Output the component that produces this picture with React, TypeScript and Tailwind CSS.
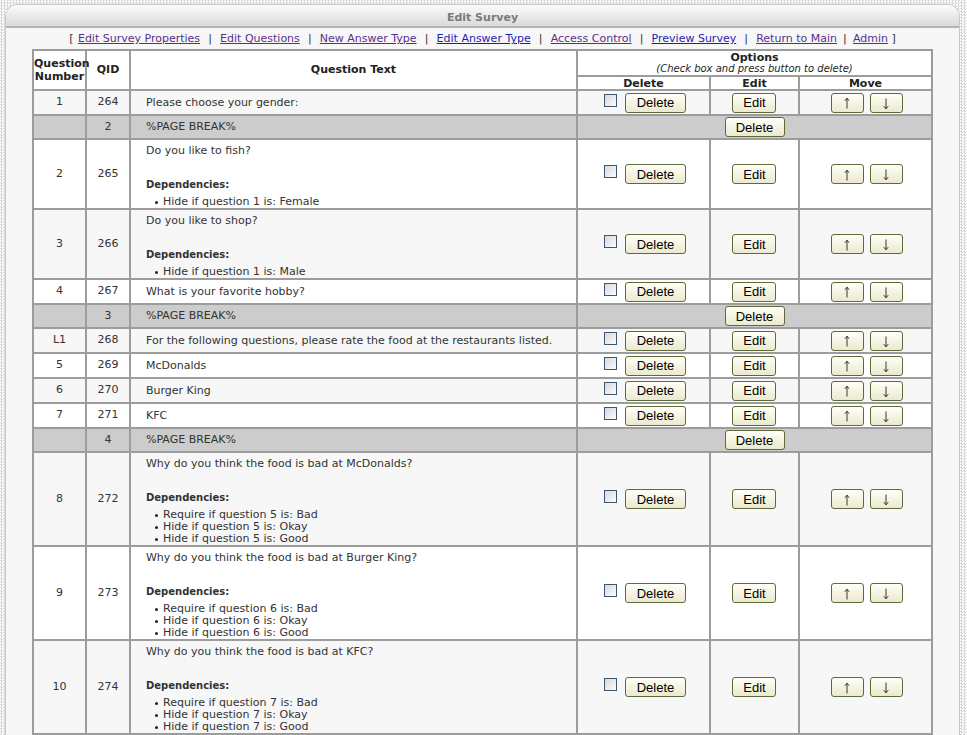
import React from "react";

type Row =
  | { type: "q"; num: string; qid: string; text: string; deps?: string[] }
  | { type: "pb"; page: string };

const rows: Row[] = [
  { type: "q", num: "1", qid: "264", text: "Please choose your gender:" },
  { type: "pb", page: "2" },
  { type: "q", num: "2", qid: "265", text: "Do you like to fish?", deps: ["Hide if question 1 is: Female"] },
  { type: "q", num: "3", qid: "266", text: "Do you like to shop?", deps: ["Hide if question 1 is: Male"] },
  { type: "q", num: "4", qid: "267", text: "What is your favorite hobby?" },
  { type: "pb", page: "3" },
  { type: "q", num: "L1", qid: "268", text: "For the following questions, please rate the food at the restaurants listed." },
  { type: "q", num: "5", qid: "269", text: "McDonalds" },
  { type: "q", num: "6", qid: "270", text: "Burger King" },
  { type: "q", num: "7", qid: "271", text: "KFC" },
  { type: "pb", page: "4" },
  {
    type: "q",
    num: "8",
    qid: "272",
    text: "Why do you think the food is bad at McDonalds?",
    deps: ["Require if question 5 is: Bad", "Hide if question 5 is: Okay", "Hide if question 5 is: Good"],
  },
  {
    type: "q",
    num: "9",
    qid: "273",
    text: "Why do you think the food is bad at Burger King?",
    deps: ["Require if question 6 is: Bad", "Hide if question 6 is: Okay", "Hide if question 6 is: Good"],
  },
  {
    type: "q",
    num: "10",
    qid: "274",
    text: "Why do you think the food is bad at KFC?",
    deps: ["Require if question 7 is: Bad", "Hide if question 7 is: Okay", "Hide if question 7 is: Good"],
  },
];

function Btn({ children, w }: { children: React.ReactNode; w: string }) {
  return (
    <span
      className={`${w} inline-flex h-[20px] items-center justify-center rounded-[3px] border border-[#5d6b3b] bg-gradient-to-b from-[#fffff7] to-[#ebe9cf] text-[13px] leading-none text-black [font-family:'Liberation_Sans',Arial,sans-serif]`}
    >
      {children}
    </span>
  );
}

function Arrow({ up }: { up: boolean }) {
  return (
    <svg width="8" height="12" viewBox="0 0 8 12" className={up ? "mt-[1px]" : "mt-[2px]"}>
      {up ? (
        <path d="M4 1.2V11.5M1.8 3.8L4 1.2L6.2 3.8" stroke="#222" strokeWidth="0.9" fill="none" />
      ) : (
        <path d="M4 0.5V10.8M1.8 8.2L4 10.8L6.2 8.2" stroke="#222" strokeWidth="0.9" fill="none" />
      )}
    </svg>
  );
}

function Check() {
  return (
    <span className="mt-[1px] inline-block h-[13px] w-[13px] border border-[#3f5670] bg-gradient-to-br from-[#d6d9de] to-[#fbfbfb]" />
  );
}

const td = "border border-[#9c9c9c]";

const links: { t: string; c: string }[] = [
  { t: "Edit Survey Properties", c: "text-[#5a2f8c]" },
  { t: "Edit Questions", c: "text-[#5a2f8c]" },
  { t: "New Answer Type", c: "text-[#5a2f8c]" },
  { t: "Edit Answer Type", c: "text-[#1e1eb4]" },
  { t: "Access Control", c: "text-[#5a2f8c]" },
  { t: "Preview Survey", c: "text-[#1e1eb4]" },
  { t: "Return to Main", c: "text-[#5a2f8c]" },
  { t: "Admin", c: "text-[#5a2f8c]" },
];

export default function App() {
  let qi = 0;
  return (
    <div className="h-[735px] w-full overflow-hidden bg-white bg-[repeating-conic-gradient(#d9d9d9_0_25%,#ffffff_0_50%)] bg-[length:3px_3px] pt-[4px] pl-[5px] pr-[7px] [font-family:'DejaVu_Sans',Verdana,sans-serif]">
      <div className="h-[760px] rounded-t-[12px] border border-[#c8c8c8] bg-[#f7f7f7]">
        <div className="flex h-[23px] items-center justify-center rounded-t-[12px] border-b-2 border-[#b4b4b4] bg-gradient-to-b from-[#fbfbfb] to-[#dadada] pt-[5px] text-[11px] font-bold text-[#7a7a7a]">
          Edit Survey
        </div>
        <div className="mt-[4px] flex h-[15px] items-center justify-center whitespace-pre text-[11px] text-[#333]">
          <span className="mr-[1px]">[ </span>
          {links.map((l, i) => (
            <React.Fragment key={l.t}>
              <span className={`underline ${l.c}`}>{l.t}</span>
              {i < links.length - 1 ? (
                i === links.length - 2 ? (
                  <span className="w-[16px] pl-[6px]">|</span>
                ) : (
                  <span className="w-[20px] text-center">|</span>
                )
              ) : (
                <span> ]</span>
              )}
            </React.Fragment>
          ))}
        </div>
        <table className="mx-auto mt-[2px] w-[900px] table-fixed border-separate border-spacing-0 border border-[#9c9c9c] text-[11px] text-[#333]">
          <colgroup>
            <col className="w-[53px]" />
            <col className="w-[44px]" />
            <col className="w-[447px]" />
            <col className="w-[133px]" />
            <col className="w-[89px]" />
            <col className="w-[133px]" />
          </colgroup>
          <thead>
            <tr className="bg-white">
              <th rowSpan={2} className={`${td} p-0 text-[11px] leading-[13px] font-bold text-[#222]`}>
                Question
                <br />
                Number
              </th>
              <th rowSpan={2} className={`${td} p-0 font-bold text-[#222]`}>
                QID
              </th>
              <th rowSpan={2} className={`${td} p-0 font-bold text-[#222]`}>
                Question Text
              </th>
              <th colSpan={3} className={`${td} h-[26px] p-0 leading-[11px] text-[#222]`}>
                <div className="font-bold">Options</div>
                <div className="text-[10px] font-normal italic">(Check box and press button to delete)</div>
              </th>
            </tr>
            <tr className="bg-white">
              <th className={`${td} h-[14px] p-0 leading-[11px] font-bold text-[#222]`}>Delete</th>
              <th className={`${td} h-[14px] p-0 leading-[11px] font-bold text-[#222]`}>Edit</th>
              <th className={`${td} h-[14px] p-0 leading-[11px] font-bold text-[#222]`}>Move</th>
            </tr>
          </thead>
          <tbody>
            {rows.map((r, i) => {
              if (r.type === "pb") {
                return (
                  <tr key={i} className="bg-[#cccccc]">
                    <td className={`${td} h-[24px] p-0`} />
                    <td className={`${td} p-0 text-center`}>{r.page}</td>
                    <td className={`${td} p-0 pl-[15px]`}>%PAGE BREAK%</td>
                    <td colSpan={3} className={`${td} p-0 text-center align-middle`}>
                      <div className="flex justify-center">
                        <Btn w="w-[60px]">Delete</Btn>
                      </div>
                    </td>
                  </tr>
                );
              }
              const bg = qi % 2 === 0 ? "bg-[#f7f7f7]" : "bg-white";
              qi++;
              return (
                <tr key={i} className={bg}>
                  <td className={`${td} h-[25px] p-0 text-center`}>{r.num}</td>
                  <td className={`${td} p-0 text-center`}>{r.qid}</td>
                  <td className={`${td} p-0 pl-[15px] ${r.deps ? "pt-[4px] pb-0" : ""}`}>
                    <div className="leading-[14px]">{r.text}</div>
                    {r.deps && (
                      <>
                        <div className="mt-[20px] text-[10px] font-bold leading-[14px]">Dependencies:</div>
                        <ul className="mt-[4px] pl-[9px] text-[11px] leading-[12px]">
                          {r.deps.map((d) => (
                            <li key={d} className="flex h-[12px] items-center">
                              <span className="mr-[5px] inline-block h-[3px] w-[3px] rounded-full bg-[#222]" />
                              <span>{d}</span>
                            </li>
                          ))}
                        </ul>
                      </>
                    )}
                  </td>
                  <td className={`${td} p-0`}>
                    <div className="flex items-start justify-center gap-[8px] pl-[3px]">
                      <Check />
                      <Btn w="w-[61px]">Delete</Btn>
                    </div>
                  </td>
                  <td className={`${td} p-0`}>
                    <div className="flex justify-center">
                      <Btn w="w-[44px]">Edit</Btn>
                    </div>
                  </td>
                  <td className={`${td} p-0`}>
                    <div className="flex justify-center gap-[6px] pl-[2px]">
                      <Btn w="w-[33px]">
                        <Arrow up />
                      </Btn>
                      <Btn w="w-[33px]">
                        <Arrow up={false} />
                      </Btn>
                    </div>
                  </td>
                </tr>
              );
            })}
          </tbody>
        </table>
      </div>
    </div>
  );
}
